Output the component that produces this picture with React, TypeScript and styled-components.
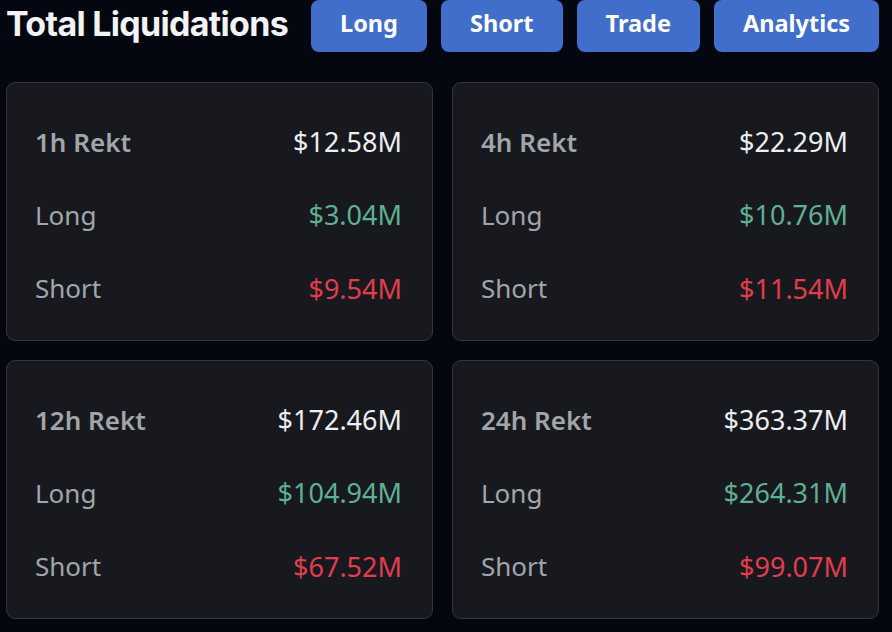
import React from 'react';
import styled, { createGlobalStyle } from 'styled-components';

const GlobalStyle = createGlobalStyle`
  html, body {
    margin: 0;
    padding: 0;
    background: #04070f;
  }
  body {
    font-family: "Noto Sans", "DejaVu Sans", sans-serif;
  }
`;

const Page = styled.div`
  width: 892px;
  height: 632px;
  overflow: hidden;
  background: #04070f;
  padding: 0 0 0 6px;
  box-sizing: border-box;
`;

const Header = styled.div`
  display: flex;
  align-items: center;
  height: 52px;
`;

const Title = styled.h1`
  margin: 0 23px 0 0;
  width: 282px;
  font-family: Inter, "Noto Sans", sans-serif;
  font-weight: 700;
  font-size: 34px;
  letter-spacing: -0.7px;
  color: #f1f3f7;
  white-space: nowrap;
  line-height: 1;
  padding-bottom: 4px;
`;

const Nav = styled.div`
  display: flex;
  gap: 14px;
  align-self: stretch;
`;

const NavButton = styled.button`
  height: 52px;
  padding: 0 29px 5px;
  border: none;
  border-radius: 8px;
  background: #416ecb;
  color: #ffffff;
  font-family: "Noto Sans", sans-serif;
  font-weight: 700;
  font-size: 23.5px;
  cursor: pointer;
  line-height: 1;
`;

const Grid = styled.div`
  display: grid;
  grid-template-columns: 427px 427px;
  column-gap: 19px;
  row-gap: 19px;
  margin-top: 30px;
`;

const Card = styled.div`
  height: 259px;
  box-sizing: border-box;
  background: #18191e;
  border: 1px solid #33353b;
  border-radius: 9px;
  padding: 22px 30px 15px 28px;
  display: flex;
  flex-direction: column;
`;

const Row = styled.div`
  height: 74px;
  display: flex;
  align-items: center;
  justify-content: space-between;
`;

const Label = styled.span<{ $strong?: boolean }>`
  font-size: 26px;
  font-weight: ${p => (p.$strong ? 600 : 400)};
  color: #a2a5aa;
`;

const Value = styled.span<{ $tone: 'total' | 'long' | 'short' }>`
  font-size: 27px;
  font-weight: 400;
  color: ${p =>
    p.$tone === 'long' ? '#5fb092' : p.$tone === 'short' ? '#e03e4c' : '#eceef2'};
`;

const buttons = ['Long', 'Short', 'Trade', 'Analytics'];

const stats = [
  { period: '1h', total: '$12.58M', long: '$3.04M', short: '$9.54M' },
  { period: '4h', total: '$22.29M', long: '$10.76M', short: '$11.54M' },
  { period: '12h', total: '$172.46M', long: '$104.94M', short: '$67.52M' },
  { period: '24h', total: '$363.37M', long: '$264.31M', short: '$99.07M' },
];

export default function App() {
  return (
    <>
      <GlobalStyle />
      <Page>
        <Header>
          <Title>Total Liquidations</Title>
          <Nav>
            {buttons.map(b => (
              <NavButton key={b}>{b}</NavButton>
            ))}
          </Nav>
        </Header>
        <Grid>
          {stats.map(s => (
            <Card key={s.period}>
              <Row>
                <Label $strong>{s.period} Rekt</Label>
                <Value $tone="total">{s.total}</Value>
              </Row>
              <Row>
                <Label>Long</Label>
                <Value $tone="long">{s.long}</Value>
              </Row>
              <Row>
                <Label>Short</Label>
                <Value $tone="short">{s.short}</Value>
              </Row>
            </Card>
          ))}
        </Grid>
      </Page>
    </>
  );
}
